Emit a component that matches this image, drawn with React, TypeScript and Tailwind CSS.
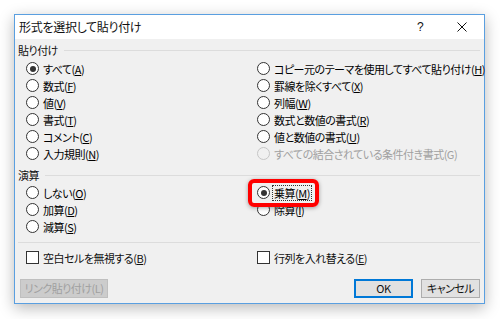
import type { ReactNode } from 'react'

const font = "font-['Noto_Sans_CJK_JP','Liberation_Sans',sans-serif] [font-feature-settings:'palt']"

function Key({ children }: { children: ReactNode }) {
  return <>(<span className="underline underline-offset-1">{children}</span>)</>
}

function Radio({ checked = false, disabled = false }: { checked?: boolean; disabled?: boolean }) {
  return (
    <span
      className={
        'w-[13px] h-[13px] rounded-full border flex items-center justify-center shrink-0 ' +
        (disabled ? 'border-[#c6c6c6] bg-[#f0f0f0]' : 'border-[#333] bg-white')
      }
    >
      {checked && <span className="w-[6px] h-[6px] rounded-full bg-[#333]" />}
    </span>
  )
}

function RadioRow({ children, checked, disabled, focus }: { children: ReactNode; checked?: boolean; disabled?: boolean; focus?: boolean }) {
  return (
    <div className="h-[17px] flex items-center gap-[3px] whitespace-nowrap">
      <Radio checked={checked} disabled={disabled} />
      <span
        className={
          'leading-[14px] px-px ' +
          (disabled ? 'text-[#a0a0a0] ' : 'text-black ') +
          (focus ? 'outline-1 outline-dotted outline-[#333]' : '')
        }
      >
        {children}
      </span>
    </div>
  )
}

function Check({ children }: { children: ReactNode }) {
  return (
    <div className="h-[17px] flex items-center gap-[4px] whitespace-nowrap">
      <span className="w-[13px] h-[13px] border border-[#333] bg-white shrink-0" />
      <span className="leading-[14px]">{children}</span>
    </div>
  )
}

function Group({ label }: { label: string }) {
  return (
    <div className="h-[14px] flex items-center gap-[6px] pr-[4px]">
      <span className="leading-[14px]">{label}</span>
      <span className="flex-1 border-t border-[#dcdcdc]" />
    </div>
  )
}

export default function App() {
  return (
    <div className={`w-[500px] h-[319px] bg-white relative pt-[14px] pl-[14px] text-[11px] tracking-[-0.5px] text-[#111] ${font}`}>
      <div className="w-[471px] h-[290px] border border-[#5a9fe0] bg-[#f0f0f0] flex flex-col shadow-[0_4px_14px_rgba(0,0,0,0.28)]">
        <div className="h-[24px] bg-white flex items-center pl-[4px] shrink-0">
          <span className="text-[12px] tracking-[-0.3px] flex-1">形式を選択して貼り付け</span>
          <span className="w-[12px] text-center text-[12px] font-['Liberation_Sans',sans-serif]">?</span>
          <span className="w-[31px]" />
          <span className="w-[10px] h-[10px] flex items-center justify-center">
            <svg width="10" height="10" viewBox="0 0 10 10">
              <path d="M0.5 0.5 L9.5 9.5 M9.5 0.5 L0.5 9.5" stroke="#111" strokeWidth="1" fill="none" />
            </svg>
          </span>
          <span className="w-[17px]" />
        </div>

        <div className="flex-1 flex flex-col pt-[4px] pl-[3px]">
          <Group label="貼り付け" />
          <div className="mt-[3px] grid grid-cols-[231px_1fr] pl-[8px]">
            <div className="flex flex-col">
              <RadioRow checked>すべて<Key>A</Key></RadioRow>
              <RadioRow>数式<Key>F</Key></RadioRow>
              <RadioRow>値<Key>V</Key></RadioRow>
              <RadioRow>書式<Key>T</Key></RadioRow>
              <RadioRow>コメント<Key>C</Key></RadioRow>
              <RadioRow>入力規則<Key>N</Key></RadioRow>
            </div>
            <div className="flex flex-col">
              <RadioRow>コピー元のテーマを使用してすべて貼り付け<Key>H</Key></RadioRow>
              <RadioRow>罫線を除くすべて<Key>X</Key></RadioRow>
              <RadioRow>列幅<Key>W</Key></RadioRow>
              <RadioRow>数式と数値の書式<Key>R</Key></RadioRow>
              <RadioRow>値と数値の書式<Key>U</Key></RadioRow>
              <RadioRow disabled>すべての結合されている条件付き書式(G)</RadioRow>
            </div>
          </div>

          <div className="mt-[6px]">
            <Group label="演算" />
          </div>
          <div className="mt-[2px] grid grid-cols-[231px_1fr] pl-[8px]">
            <div className="flex flex-col">
              <RadioRow>しない<Key>O</Key></RadioRow>
              <RadioRow>加算<Key>D</Key></RadioRow>
              <RadioRow>減算<Key>S</Key></RadioRow>
            </div>
            <div className="flex flex-col">
              <RadioRow checked focus>乗算<Key>M</Key></RadioRow>
              <RadioRow>除算<Key>I</Key></RadioRow>
            </div>
          </div>

          <div className="mt-[7px] mr-[4px] border-t border-[#dcdcdc]" />

          <div className="mt-[6px] grid grid-cols-[231px_1fr] pl-[8px]">
            <Check>空白セルを無視する<Key>B</Key></Check>
            <Check>行列を入れ替える<Key>E</Key></Check>
          </div>

          <div className="mt-[13px] flex items-center pr-[4px] whitespace-nowrap">
            <div className="w-[88px] h-[19px] bg-[#cccccc] border border-[#bfbfbf] text-[#a0a0a0] flex items-center justify-center ml-[2px]">
              リンク貼り付け(L)
            </div>
            <div className="flex-1" />
            <div className="w-[59px] h-[19px] bg-[#e1e1e1] border-2 border-[#0078d7] flex items-center justify-center">
              OK
            </div>
            <div className="w-[59px] h-[19px] bg-[#e1e1e1] border border-[#adadad] flex items-center justify-center ml-[8px]">
              キャンセル
            </div>
          </div>
        </div>
      </div>

      <div className="absolute left-[248px] top-[179px] w-[71px] h-[28px] rounded-[6px] border-[4px] border-[#ff0000] shadow-[0_1px_4px_rgba(0,0,0,0.35)]" />
    </div>
  )
}
